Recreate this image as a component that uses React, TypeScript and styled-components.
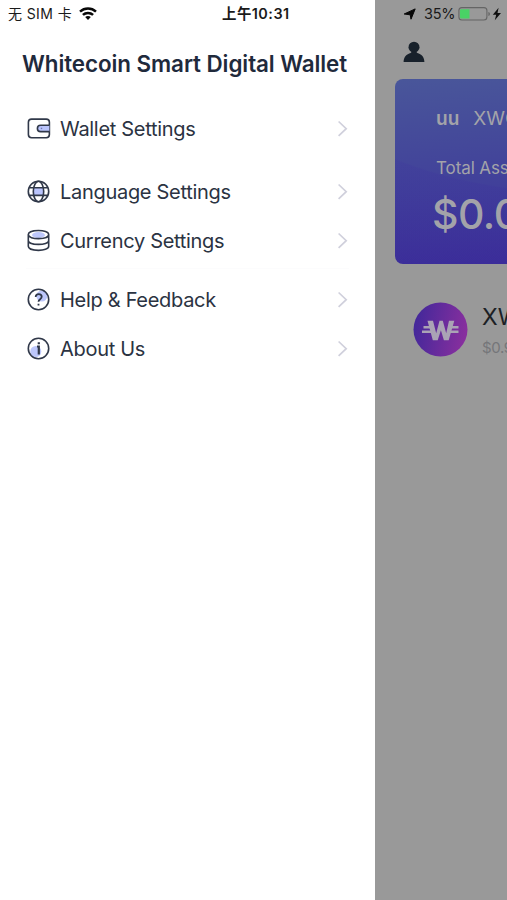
import React from 'react';
import styled, { createGlobalStyle } from 'styled-components';

const GlobalStyle = createGlobalStyle`
  * { box-sizing: border-box; }
  body { margin: 0; background: #fff; font-family: Inter, "Noto Sans CJK SC", sans-serif; }
  svg { display: block; flex: none; }
`;

const Screen = styled.div`
  display: flex;
  width: 507px;
  height: 900px;
  overflow: hidden;
`;

const Drawer = styled.aside`
  flex: none;
  width: 375px;
  background: #fff;
  color: #2b3342;
`;

const Backdrop = styled.main`
  flex: none;
  width: 132px;
  overflow: hidden;
  background: #999;
  white-space: nowrap;
`;

const StatusBar = styled.div<{ $start: number }>`
  display: flex;
  align-items: center;
  height: 28px;
  padding-left: ${(p) => p.$start}px;
  font-size: 14px;
  line-height: 20px;
  color: #1a1a1a;
  white-space: nowrap;
`;

const Carrier = styled.span`
  width: 71px;
  letter-spacing: 0.4px;
`;

const Clock = styled.span`
  margin-left: 125px;
  font-size: 14.4px;
  font-weight: 600;
  letter-spacing: 0.5px;
`;

const Charge = styled.span`
  width: 34px;
  margin-left: 7px;
  font-size: 14.5px;
  letter-spacing: -0.2px;
`;

const Title = styled.h1`
  height: 32px;
  margin: 20px 0 0 22px;
  font-size: 22.4px;
  font-weight: 590;
  line-height: 32px;
  letter-spacing: -0.07px;
  color: #1f2a3c;
  white-space: nowrap;
`;

const Menu = styled.nav`
  padding: 24px 26px 0;
`;

const Group = styled.div`
  &:nth-child(2) {
    margin-top: 14px;
  }
  &:nth-child(3) {
    margin-top: 3px;
    padding-top: 6px;
    border-top: 1px solid #fcfcfd;
  }
`;

const Row = styled.div`
  display: flex;
  align-items: center;
  height: 49px;
`;

const Label = styled.span`
  flex: 1;
  margin-left: 9px;
  font-size: 20px;
  line-height: 28px;
  letter-spacing: -0.3px;
  white-space: nowrap;
`;

const Header = styled.header`
  display: flex;
  align-items: center;
  height: 51px;
  padding: 0 0 3px 28px;
`;

const Card = styled.section`
  width: 470px;
  height: 185px;
  margin-left: 20px;
  padding: 27px 0 0 41px;
  border-radius: 8px;
  color: #a3a3a9;
  background:
    radial-gradient(ellipse 300px 150px at 190px -35px, transparent 99%, rgba(56, 35, 160, 0.12) 100%),
    linear-gradient(176deg, #49569a 0%, #41409a 52%, #3a2898 100%);
`;

const Account = styled.div`
  display: flex;
  gap: 14px;
  height: 26px;
  font-size: 19px;
  line-height: 26px;
`;

const AccountName = styled.span`
  font-weight: 600;
`;

const AssetsLabel = styled.div`
  margin-top: 25px;
  font-size: 17px;
  line-height: 22px;
  letter-spacing: -0.1px;
`;

const Balance = styled.div`
  margin: 10px 0 0 -4px;
  font-size: 41px;
  font-weight: 540;
  line-height: 50px;
  letter-spacing: -0.5px;
`;

const Token = styled.section`
  display: flex;
  align-items: center;
  gap: 14px;
  height: 56px;
  margin: 37px 0 0 38px;
`;

const TokenName = styled.div`
  margin-top: 2px;
  font-size: 23px;
  line-height: 31px;
  color: #1c1f25;
`;

const TokenPrice = styled.div`
  margin-top: 4px;
  font-size: 15px;
  line-height: 22px;
  letter-spacing: -0.4px;
  color: #75767a;
`;

type IconKind = 'wallet' | 'globe' | 'coins' | 'help' | 'info';

const iconArt: Record<IconKind, React.ReactNode> = {
  wallet: (
    <>
      <rect x="2.4" y="3.1" width="21" height="18.6" rx="3.2" />
      <path d="M23.4 9.2h-8.8a3.1 3.1 0 0 0 0 6.4h8.8" fill="#bac4fc" />
      <path d="M14.8 12.4h1.4" stroke="#6e79b5" strokeWidth="1.4" />
    </>
  ),
  globe: (
    <>
      <path d="M7.5 9h10v8h-10z" fill="#bac4fc" stroke="none" />
      <circle cx="12.5" cy="12.5" r="10.2" />
      <ellipse cx="12.5" cy="12.5" rx="5.2" ry="10.2" />
      <path d="M3 8.8h19M3 16.4h19" />
    </>
  ),
  coins: (
    <>
      <ellipse cx="12.5" cy="7" rx="6.5" ry="3" fill="#bdc7fb" stroke="none" />
      <path d="M2.3 6.6C2.3 1.2 22.7 1.2 22.7 6.6S2.3 12 2.3 6.6ZM2.3 6.6v11.7c0 5.4 20.4 5.4 20.4 0V6.6M2.3 12.5c0 5.2 20.4 5.2 20.4 0" />
    </>
  ),
  help: (
    <>
      <circle cx="15.8" cy="9" r="5.5" fill="#bdc7fb" stroke="none" />
      <circle cx="12.5" cy="12.5" r="10.2" />
      <path d="M9.7 10c0-4 6-3.7 6-.2 0 2.5-3.2 2.3-3.2 5M12.5 16.7v1.8" strokeWidth="1.8" />
    </>
  ),
  info: (
    <>
      <circle cx="9.8" cy="15.5" r="5.5" fill="#bdc7fb" stroke="none" />
      <circle cx="12.5" cy="12.5" r="10.2" />
      <path d="M12.8 6.2v2M11 10.5h1.8v8" strokeWidth="2.2" />
    </>
  ),
};

const MenuIcon = ({ kind }: { kind: IconKind }) => (
  <svg width="25" height="25" viewBox="0 0 25 25" fill="none" stroke="#303849" strokeWidth="1.6">
    {iconArt[kind]}
  </svg>
);

const Chevron = () => (
  <svg width="12" height="18" viewBox="0 0 12 18" fill="none" stroke="#d0d0dc" strokeWidth="1.7">
    <path d="M1.6 1.5 9.2 8.7l-7.6 7.2" />
  </svg>
);

const Wifi = () => (
  <svg width="18" height="14" viewBox="0 0 18 14" fill="none" stroke="#080808" strokeWidth="2.5">
    <path d="M1 4.6c4.6-4.1 11.4-4.1 16 0M3.9 7.9c2.9-2.7 7.3-2.7 10.2 0" />
    <path d="M6.2 10.1c1.6-1.4 4-1.4 5.6 0L9 13z" fill="#080808" stroke="none" />
  </svg>
);

const Battery = () => (
  <svg width="34" height="14" viewBox="0 0 34 14">
    <rect x=".9" y=".6" width="28" height="12.4" rx="3" fill="none" stroke="#656565" strokeWidth="1.1" />
    <path d="M3 2.2h8.5v9.2H3a1 1 0 0 1-1-1V3.2a1 1 0 0 1 1-1Z" fill="#49d265" />
    <path d="M30.4 5c2 .6 2 3.4 0 4z" fill="#656565" />
  </svg>
);

const groups: { icon: IconKind; label: string }[][] = [
  [{ icon: 'wallet', label: 'Wallet Settings' }],
  [
    { icon: 'globe', label: 'Language Settings' },
    { icon: 'coins', label: 'Currency Settings' },
  ],
  [
    { icon: 'help', label: 'Help & Feedback' },
    { icon: 'info', label: 'About Us' },
  ],
];

export default function App() {
  return (
    <>
      <GlobalStyle />
      <Screen>
        <Drawer>
          <StatusBar $start={8}>
            <Carrier>无 SIM 卡</Carrier>
            <Wifi />
            <Clock>上午10:31</Clock>
          </StatusBar>
          <Title>Whitecoin Smart Digital Wallet</Title>
          <Menu>
            {groups.map((rows) => (
              <Group key={rows[0].label}>
                {rows.map((row) => (
                  <Row key={row.label}>
                    <MenuIcon kind={row.icon} />
                    <Label>{row.label}</Label>
                    <Chevron />
                  </Row>
                ))}
              </Group>
            ))}
          </Menu>
        </Drawer>
        <Backdrop>
          <StatusBar $start={28}>
            <svg width="14" height="13" viewBox="0 0 14 13">
              <path d="M12.2.9 8 11.2 7.2 6.8 1.2 6z" fill="#080808" stroke="#080808" strokeWidth="1" strokeLinejoin="round" />
            </svg>
            <Charge>35%</Charge>
            <Battery />
            <svg width="10" height="14" viewBox="0 0 10 14">
              <path d="M6.6.7.8 7.7h3.4L2.8 13.3 9 5.9H5.5z" fill="#101010" />
            </svg>
          </StatusBar>
          <Header>
            <svg width="22" height="22" viewBox="0 0 22 22" fill="#18212b">
              <circle cx="11" cy="6.2" r="5.5" />
              <path d="M.6 21C.6 16 3.5 13 7.7 12L9 10.500h4l1.300 1.500c4.200 1 7.100 4 7.100 9z" />
            </svg>
          </Header>
          <Card>
            <Account>
              <AccountName>uu</AccountName>
              <span>XWC</span>
            </Account>
            <AssetsLabel>Total Assets</AssetsLabel>
            <Balance>$0.00</Balance>
          </Card>
          <Token>
            <svg width="55" height="55" viewBox="0 0 55 55">
              <defs>
                <linearGradient id="coin" x1="0" y1=".4" x2="1" y2=".6">
                  <stop offset="0" stopColor="#43289a" />
                  <stop offset="1" stopColor="#8a2f9e" />
                </linearGradient>
              </defs>
              <circle cx="27.5" cy="27.5" r="27" fill="url(#coin)" />
              <g fill="#aaa3b5">
                <path d="M14.500 18.700h5.500l3.200 12.500 3.300-12.500h3.300l3.400 12.500 2.800-12.500h5.300l-5.600 19.600h-4.800l-3-10-3.200 10h-4.900z" />
                <path d="M10.5 24h7v2.5h-7zM9 28.500h9.500V31H9zM38 24h7.500v2.500H38zM37 28.500h8.500V31H37z" />
              </g>
            </svg>
            <div>
              <TokenName>XWC</TokenName>
              <TokenPrice>$0.98</TokenPrice>
            </div>
          </Token>
        </Backdrop>
      </Screen>
    </>
  );
}
